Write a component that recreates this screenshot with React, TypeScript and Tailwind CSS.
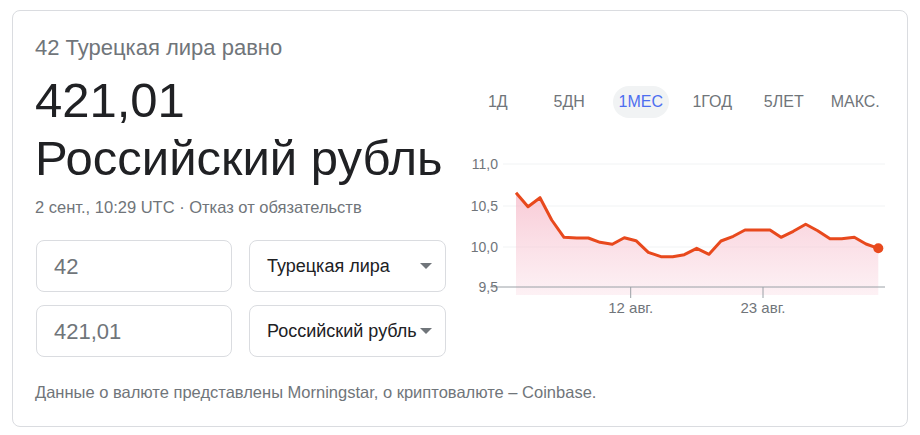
const pts: [number, number][] = [
  [516, 192.7], [528, 206.7], [540, 197.7], [551.7, 220], [564, 237.3], [576.7, 238],
  [588.3, 238], [600, 242.3], [612.3, 244.3], [624.3, 237.7], [636, 240.7], [648.3, 252.3],
  [661, 256.7], [672.7, 256.7], [684.3, 254.7], [696.7, 248.3], [709, 254.3], [721, 241],
  [733.3, 236.3], [745, 230], [756.7, 230], [770, 230], [781, 237.3], [793.3, 231.3],
  [805.7, 224.3], [817.7, 230.7], [830, 238.7], [841.7, 238.7], [854.3, 237.3], [866, 244],
  [878.3, 248.3],
];

const OX = 462;
const OY = 150;

const Chart = () => {
  const p = pts.map(([x, y]) => [x - OX, y - OY]);
  const line = p.map(([x, y], i) => `${i ? "L" : "M"}${x.toFixed(1)} ${y.toFixed(1)}`).join(" ");
  const area = `${line} L${p[p.length - 1][0]} 145 L${p[0][0]} 145 Z`;
  const last = p[p.length - 1];
  const grid = [
    { y: 14, label: "11,0" },
    { y: 56, label: "10,5" },
    { y: 97, label: "10,0" },
  ];
  return (
    <svg width="430" height="170" className="block" style={{ fontFamily: "'Liberation Sans', Arial, sans-serif" }}>
      <defs>
        <linearGradient id="fill" x1="0" y1="0" x2="0" y2="1">
          <stop offset="0%" stopColor="#f4a8bb" stopOpacity="0.6" />
          <stop offset="100%" stopColor="#fbe3ea" stopOpacity="0.5" />
        </linearGradient>
      </defs>
      {grid.map((g) => (
        <g key={g.label}>
          <line x1="41" x2="423" y1={g.y} y2={g.y} stroke="#f1f3f4" strokeWidth="1" />
          <text x="36" y={g.y + 5} textAnchor="end" fontSize="14" fill="#70757a">
            {g.label}
          </text>
        </g>
      ))}
      <path d={area} fill="url(#fill)" />
      <line x1="28" x2="423" y1="137" y2="137" stroke="#9aa0a6" strokeWidth="1" />
      <text x="36" y="142" textAnchor="end" fontSize="14" fill="#70757a">
        9,5
      </text>
      <line x1="168.7" x2="168.7" y1="137" y2="148" stroke="#9aa0a6" strokeWidth="1" />
      <line x1="301" x2="301" y1="137" y2="148" stroke="#9aa0a6" strokeWidth="1" />
      <text x="168.7" y="163" textAnchor="middle" fontSize="15" fill="#70757a">
        12 авг.
      </text>
      <text x="301" y="163" textAnchor="middle" fontSize="15" fill="#70757a">
        23 авг.
      </text>
      <path d={line} fill="none" stroke="#e8491d" strokeWidth="3" strokeLinejoin="round" />
      <circle cx={last[0]} cy={last[1]} r="5" fill="#e8491d" />
    </svg>
  );
};

const Arrow = () => (
  <svg width="12" height="6" viewBox="0 0 12 6" className="shrink-0">
    <path d="M0 0h12L6 6z" fill="#70757a" />
  </svg>
);

const tabs = ["1Д", "5ДН", "1МЕС", "1ГОД", "5ЛЕТ", "МАКС."];

export default function App() {
  return (
    <div className="w-[920px] h-[435px] bg-white pt-[10px] pl-[12px] font-['Liberation_Sans',Arial,sans-serif]">
      <div className="w-[896px] h-[417px] border border-[#dadce0] rounded-[8px] pl-[22px] pt-[25px] flex">
        <div className="w-[412px] flex flex-col">
          <div className="text-[22px] leading-[24px] text-[#70757a] whitespace-nowrap">42 Турецкая лира равно</div>
          <div className="mt-[11px] text-[49px] leading-[58px] text-[#202124]">421,01</div>
          <div className="text-[49px] leading-[58px] text-[#202124] whitespace-nowrap">Российский рубль</div>
          <div className="mt-[10px] text-[16.5px] leading-[20px] text-[#70757a] whitespace-nowrap">
            2 сент., 10:29 UTC · Отказ от обязательств
          </div>
          <div className="mt-[23px] flex flex-col gap-[13px] pl-[1px]">
            {[
              ["42", "Турецкая лира"],
              ["421,01", "Российский рубль"],
            ].map(([v, c]) => (
              <div key={c} className="flex gap-[17px]">
                <div className="w-[196px] h-[52px] border border-[#dadce0] rounded-[8px] flex items-center pl-[17px] text-[22px] text-[#70757a]">
                  {v}
                </div>
                <div className="w-[197px] h-[52px] border border-[#dadce0] rounded-[8px] flex items-center justify-between pl-[17px] pr-[13px] text-[18px] text-[#202124] whitespace-nowrap">
                  <span>{c}</span>
                  <Arrow />
                </div>
              </div>
            ))}
          </div>
          <div className="mt-[25px] text-[16.5px] leading-[20px] text-[#70757a] whitespace-nowrap">
            Данные о валюте представлены Morningstar, о криптовалюте – Coinbase.
          </div>
        </div>
        <div className="ml-[15px] flex flex-col">
          <div className="mt-[50px] flex w-[429px]">
            {tabs.map((t) => (
              <div key={t} className="flex-1 flex justify-center">
                <div
                  className={
                    t === "1МЕС"
                      ? "h-[32px] px-[6px] rounded-full bg-[#f1f3f4] flex items-center text-[16px] text-[#4d6ef0]"
                      : "h-[32px] px-[6px] flex items-center text-[16px] text-[#70757a]"
                  }
                >
                  {t}
                </div>
              </div>
            ))}
          </div>
          <div className="mt-[32px]">
            <Chart />
          </div>
        </div>
      </div>
    </div>
  );
}
